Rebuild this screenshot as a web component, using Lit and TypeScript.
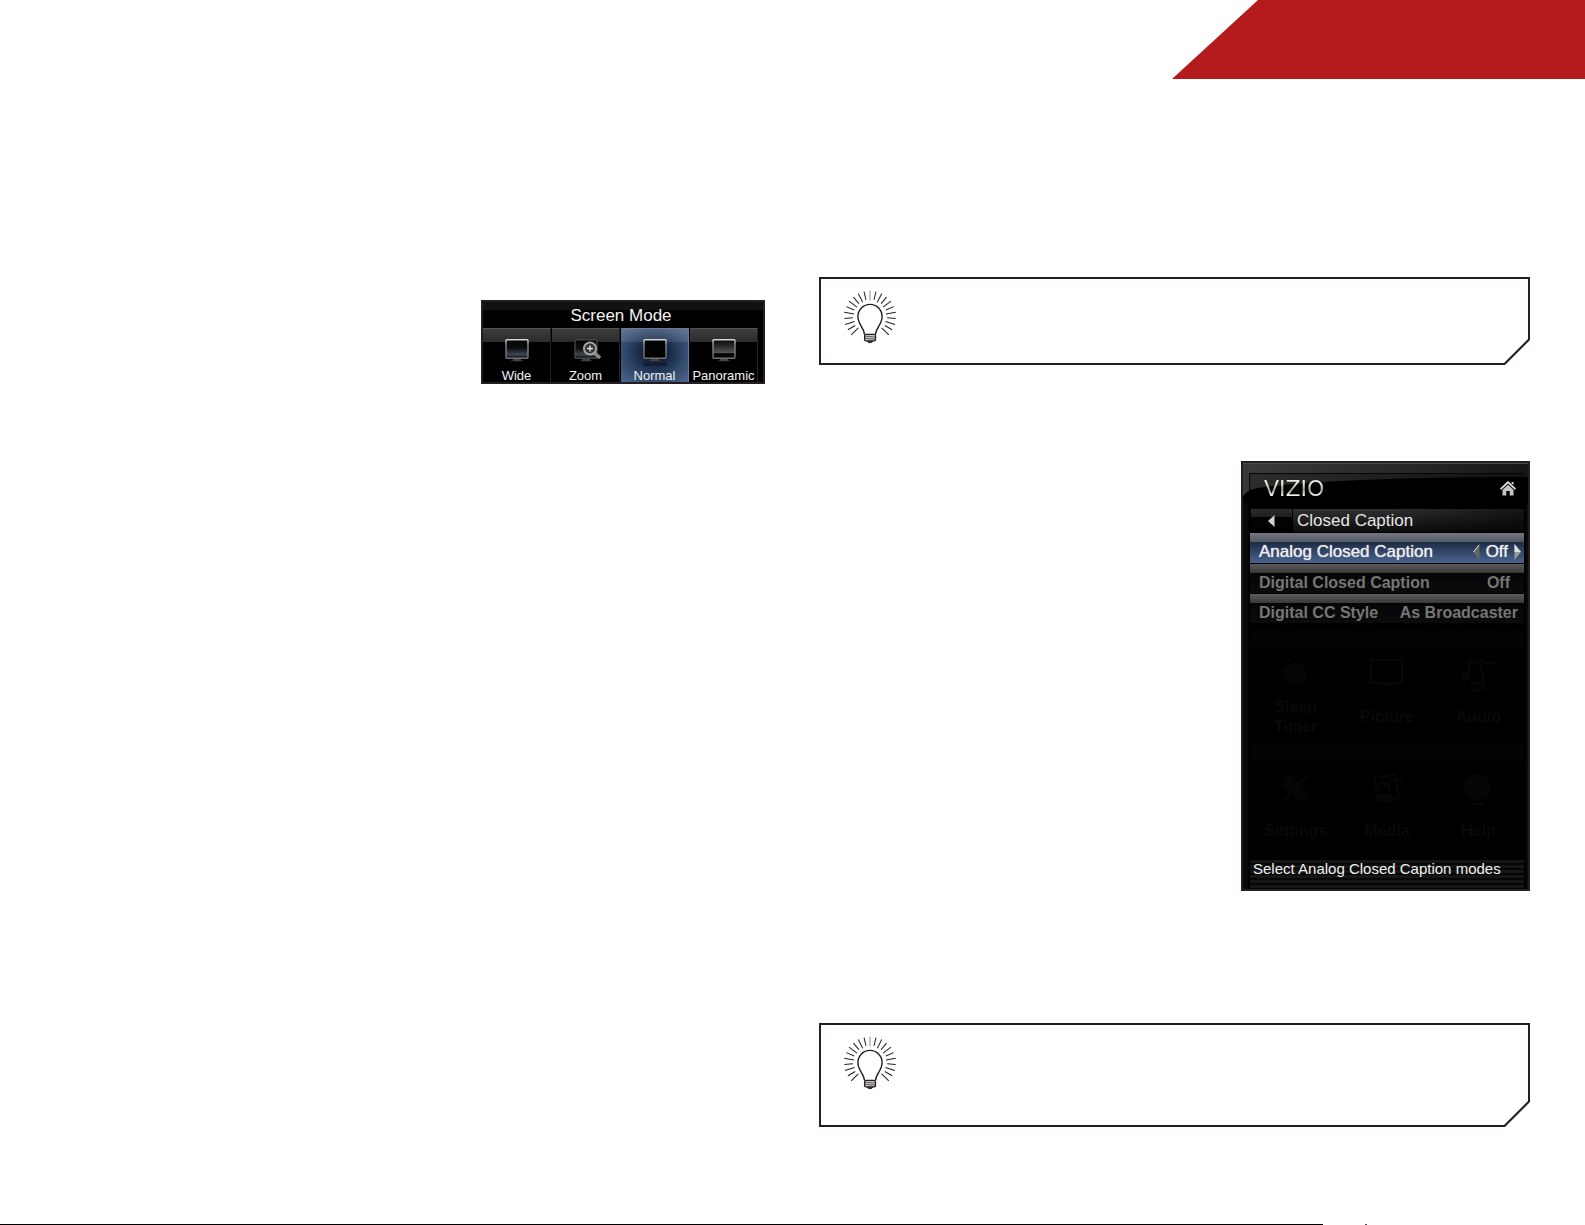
import { LitElement, html, svg, css } from "lit";
import { customElement, property, state } from "lit/decorators.js";
import { classMap } from "lit/directives/class-map.js";

@customElement("tip-box")
class TipBox extends LitElement {
  static styles = css`
    :host {
      display: block;
    }
    .edge {
      box-sizing: border-box;
      height: 100%;
      padding: 2px;
      background: #231f20;
      clip-path: polygon(0 0, 100% 0, 100% calc(100% - 25px), calc(100% - 25px) 100%, 0 100%);
    }
    .face {
      box-sizing: border-box;
      height: 100%;
      padding: 11px 23px;
      background: #fff;
      clip-path: polygon(0 0, 100% 0, 100% calc(100% - 24px), calc(100% - 24px) 100%, 0 100%);
    }
    .bulb {
      display: block;
      width: 52px;
      height: 54px;
    }
  `;

  render() {
    const rays = Array.from({ length: 21 }, (_, i) => (i - 10) * 13.4);
    return html`
      <aside class="edge">
        <div class="face">
          <svg class="bulb" viewBox="0 0 52 54" fill="none" stroke="#231f20" aria-hidden="true">
            ${rays.map(
              (a, i) => svg`<path d="M26 ${i % 2 ? 9.5 : 10.5}V${i % 2 ? 1 : 0.6}" stroke-width="${i === 10 ? 0.5 : 1}" transform="rotate(${a} 26 26.7)"/>`
            )}
            <path
              d="M20.4 44.3C20.3 38 13.9 34.5 13.9 26.5a12.1 12.1 0 0 1 24.2 0C38.1 34.5 31.8 38 31.6 44.3"
              stroke-width="1.4"
            />
            <rect x="20.6" y="44.4" width="10.9" height="6.4" rx="1" fill="#c9c5c5" stroke-width="1.3" />
            <path d="M21 46.2l10 .8M21 48.3l10 .8" stroke-width=".6" />
            <path d="M23.2 51.4h5.6l-1.4 1.2h-2.8z" fill="#231f20" stroke-width=".9" />
          </svg>
        </div>
      </aside>
    `;
  }
}

@customElement("screen-mode")
class ScreenMode extends LitElement {
  @state() private mode = "Normal";

  static styles = css`
    :host {
      display: block;
      font-family: "Liberation Sans", Arial, sans-serif;
      color: #f2f2f2;
    }
    .panel {
      border: 2px solid #231f20;
      background: linear-gradient(#121212 0 8px, #000 8px);
    }
    .title {
      margin: 0;
      padding: 4px 4px 2px 0;
      font-size: 17px;
      line-height: 20px;
      font-weight: 400;
      text-align: center;
    }
    .modes {
      display: grid;
      grid-template-columns: repeat(4, 1fr);
      gap: 1px;
      padding-right: 5px;
    }
    .mode {
      display: flex;
      flex-direction: column;
      align-items: center;
      height: 54px;
      margin: 0;
      padding: 10px 0 0;
      border: 0;
      border-top: 1px solid #555;
      border-right: 1px solid #222;
      background: linear-gradient(#3e3e3e, #2b2b2b 13px, #000 13px);
      color: inherit;
      font: 13px/14px "Liberation Sans", Arial, sans-serif;
      white-space: nowrap;
    }
    .mode.on {
      border-color: #6b7a92;
      background: linear-gradient(rgba(190, 200, 215, 0.24), rgba(150, 165, 185, 0.18) 13px, transparent 13px),
        radial-gradient(ellipse at 50% 45%, #0d1a30 15%, #2a4265 55%, #4a6489 95%);
    }
    .icon {
      flex: none;
      width: 30px;
      height: 30px;
    }
  `;

  private icon(name: string) {
    const fill = name === "Normal" ? "#030303" : name === "Panoramic" ? "url(#p)" : "url(#w)";
    return html`<svg class="icon" viewBox="0 0 30 30" aria-hidden="true">
      <defs>
        <linearGradient id="w" x2="0" y2="1">
          <stop offset="0" stop-color="#050505" /><stop offset=".45" stop-color="#0c0d10" />
          <stop offset=".8" stop-color="#3c4653" /><stop offset="1" stop-color="#0a0a0a" />
        </linearGradient>
        <linearGradient id="p" x2="0" y2="1">
          <stop offset="0" stop-color="#0a0a0a" /><stop offset=".3" stop-color="#242424" />
          <stop offset=".7" stop-color="#555" /><stop offset=".75" stop-color="#050505" />
        </linearGradient>
        <linearGradient id="rim" x2="0" y2="1">
          <stop offset="0" stop-color="#d5d5d5" /><stop offset=".3" stop-color="#8a8a8a" />
          <stop offset="1" stop-color="#707070" />
        </linearGradient>
      </defs>
      <rect x="4" y=".8" width="22" height="18.4" rx="1" fill=${fill} stroke=${name === "Zoom" ? "#444" : "url(#rim)"} stroke-width="1.4" />
      <path d="M11 20h8v1.5h2V22.2H9v-.7h2z" fill="#444" />
      ${name === "Normal" ? svg`<path d="M3 24h24v2H3zM4 26h22v1H4z" fill="#101d33"/>` : ""}
      ${name === "Zoom"
        ? svg`<path d="M23.5 14l5.5 5" stroke="#888" stroke-width="3.6"/><circle cx="19" cy="9.5" r="6" fill="#333" stroke="#a5a5a5" stroke-width="2"/><path d="M19 6.5v6M16 9.5h6" stroke="#ddd" stroke-width="1.4"/>`
        : ""}
    </svg>`;
  }

  render() {
    return html`
      <section class="panel" aria-labelledby="t">
        <h2 class="title" id="t">Screen Mode</h2>
        <div class="modes">
          ${["Wide", "Zoom", "Normal", "Panoramic"].map(
            (m) => html`<button
              class=${classMap({ mode: true, on: m === this.mode })}
              aria-pressed=${m === this.mode}
              @click=${() => (this.mode = m)}
            >${this.icon(m)}${m}</button>`
          )}
        </div>
      </section>
    `;
  }
}

const TILES = [
  {
    lines: ["Sleep", "Timer"],
    art: svg`<circle cx="17" cy="18" r="10"/><path d="M9 5l4-2M25 5l-4-2" />`,
  },
  {
    lines: ["Picture"],
    art: svg`<path d="M2 4h31v23H2zM11 29h13" fill="none"/><path d="M16 18l5-3"/>`,
  },
  {
    lines: ["Audio"],
    art: svg`<path d="M9 20V5l7 2M24 29L20 4l8 4 8-2" fill="none"/><ellipse cx="6" cy="20" rx="4" ry="3"/><ellipse cx="18" cy="31" rx="7" ry="4" fill="none"/>`,
  },
  {
    lines: ["Settings"],
    art: svg`<path d="M4 32L30 5M5 8l20 23" /><path d="M8 5l6 2 3 5 9 8 5 5-4 6-7-4-8-8-7-4z" stroke-dasharray="4 2"/>`,
  },
  {
    lines: ["Media"],
    art: svg`<path d="M6 8l20-3 4 23-22 3zM20 28V12l14-4" fill="none"/><path d="M8 18l5-7 4 6 6-9"/><ellipse cx="16" cy="28" rx="8" ry="3"/>`,
  },
  {
    lines: ["Help"],
    art: svg`<circle cx="17" cy="17" r="12"/><path d="M13 13q4-6 8 0 0 3-4 5v4M10 34h14" fill="none"/>`,
  },
];

@customElement("caption-menu")
class CaptionMenu extends LitElement {
  @property({ type: String }) help = "Select Analog Closed Caption modes";

  static styles = css`
    :host {
      display: block;
      font-family: "Liberation Sans", Arial, sans-serif;
      color: #e6e6e6;
    }
    button {
      margin: 0;
      padding: 0;
      border: 0;
      background: none;
      color: inherit;
      font: inherit;
    }
    svg {
      display: block;
    }
    .menu {
      position: relative;
      display: flex;
      flex-direction: column;
      border: 2px solid #231f20;
      padding: 10px 4px 0 7px;
      background: linear-gradient(90deg, #090909 5px, #000 5px, #000 calc(100% - 2px), #0a0a0a calc(100% - 2px));
    }
    .gloss {
      position: absolute;
      left: 0;
      top: 0;
      width: 100%;
      height: 40px;
    }
    .brand {
      position: relative;
      display: flex;
      align-items: center;
      justify-content: space-between;
      height: 31px;
      padding: 0 8px 0 14px;
      margin-bottom: 5px;
    }
    .logo {
      font: 22px/26px "DejaVu Sans", sans-serif;
      color: transparent;
      background: linear-gradient(#f0ece4 7px, #a39d94 14px, #f5f1e9 19px);
      -webkit-background-clip: text;
      background-clip: text;
    }
    .crumb {
      display: grid;
      grid-template-columns: 41px 1fr;
      gap: 1px;
      height: 23px;
      padding-left: 1px;
      margin-bottom: 1px;
    }
    .back {
      display: grid;
      place-items: center;
      background: linear-gradient(#2c2c2c, #1e1e1e 8px, #020202 8px);
    }
    .heading {
      margin: 0;
      padding-left: 4px;
      font-size: 17px;
      line-height: 23px;
      font-weight: 400;
      background: linear-gradient(90deg, transparent 40%, rgba(0, 0, 0, 0.55)), linear-gradient(#303030, #0c0c0c);
    }
    .rows {
      display: grid;
      gap: 1px;
      margin: 0;
    }
    .row {
      display: flex;
      align-items: flex-end;
      justify-content: space-between;
      box-sizing: border-box;
      height: 29px;
      padding: 0 6px 0 9px;
      font-size: 16px;
      line-height: 20px;
      font-weight: 700;
      color: #767676;
      background: linear-gradient(#5c5c5c, #383838 9px, #050505 9px, #0b0b0b);
    }
    .row.on {
      height: 30px;
      padding-right: 3px;
      padding-bottom: 1px;
      font-size: 17px;
      font-weight: 400;
      color: #ededed;
      text-shadow: 0 0 1px #ededed;
      background: linear-gradient(#74787c, #505964 9px, #1d2b44 9px, #4a648f);
    }
    .row dd {
      margin: 0;
    }
    .row .plain {
      padding-right: 8px;
    }
    .stepper {
      display: flex;
      align-items: center;
      gap: 6px;
    }
    .tiles {
      display: grid;
      grid-template-columns: repeat(3, 1fr);
      grid-auto-rows: 114px;
      padding: 7px 0 2px;
      color: #090909;
    }
    .tile {
      display: flex;
      flex-direction: column;
      align-items: center;
      padding-top: 26px;
      font-size: 16px;
      line-height: 20px;
      font-weight: 700;
      background: linear-gradient(#020303 17px, #000 17px);
    }
    .art {
      width: 36px;
      height: 36px;
      fill: #040505;
      stroke: #060707;
      stroke-width: 2;
      flex: none;
    }
    .name {
      display: grid;
      align-content: center;
      height: 50px;
    }
    .help {
      margin: 0;
      box-sizing: border-box;
      height: 29px;
      padding-left: 3px;
      font-size: 15px;
      line-height: 17px;
      white-space: nowrap;
      color: #f0f0f0;
      background: repeating-linear-gradient(#161616 0 3px, #060606 3px 5px);
    }
  `;

  render() {
    return html`
      <section class="menu" aria-labelledby="h">
        <svg class="gloss" viewBox="0 0 285 40" preserveAspectRatio="none" aria-hidden="true">
          <defs>
            <linearGradient id="f"><stop stop-color="#3a3a3a" /><stop offset=".6" stop-color="#262626" /><stop offset="1" stop-color="#161616" /></linearGradient>
            <linearGradient id="b"><stop stop-color="#2c2c2c" /><stop offset=".7" stop-color="#1a1a1a" /><stop offset="1" stop-color="#111" /></linearGradient>
          </defs>
          <path d="M0 0H285V40H0z" fill="url(#f)" />
          <path d="M0 .5H285" stroke="#4c4c4c" />
          <path d="M6 10H281V40H6z" fill="url(#b)" />
          <path d="M6.5 40V10.5H281" fill="none" stroke="#050505" />
          <path d="M0 40V33Q4 27 15 25Q100 14 285 14V40z" fill="#000" />
        </svg>
        <header class="brand">
          <span class="logo">VIZIO</span>
          <button aria-label="Home">
            <svg width="16" height="15" viewBox="0 0 16 15">
              <path d="M8 0L16 7.5 14.8 8.8 8 2.6 1.2 8.8 0 7.5zM11.5 1H13.5V4L11.5 2.2z" fill="#e2e2e2" />
              <path d="M2.5 8.8L8 3.8 13.5 8.8V14.5H9.7V10H6.3V14.5H2.5z" fill="#c4c4c4" />
            </svg>
          </button>
        </header>
        <nav class="crumb">
          <button class="back" aria-label="Back">
            <svg width="7" height="12" viewBox="0 0 7 12"><path d="M6.5 0V12L0 6z" fill="#d0d0d0" /></svg>
          </button>
          <h2 class="heading" id="h">Closed Caption</h2>
        </nav>
        <dl class="rows">
          <div class="row on">
            <dt>Analog Closed Caption</dt>
            <dd class="stepper">
              <button aria-label="Previous">
                <svg width="7" height="16" viewBox="0 0 7 16"><path d="M6.5 0V16L0 8z" fill="#666" /><path d="M6 1L.5 8" stroke="#ddd" /></svg>
              </button>
              <span>Off</span>
              <button aria-label="Next">
                <svg width="7" height="16" viewBox="0 0 7 16"><path d="M.5 0V16L7 8z" fill="#999" /><path d="M.5 0L7 8H.5z" fill="#ddd" /></svg>
              </button>
            </dd>
          </div>
          <div class="row">
            <dt>Digital Closed Caption</dt>
            <dd class="plain">Off</dd>
          </div>
          <div class="row">
            <dt>Digital CC Style</dt>
            <dd>As Broadcaster</dd>
          </div>
        </dl>
        <div class="tiles">
          ${TILES.map(
            (t) => html`<button class="tile">
              <svg class="art" viewBox="0 0 36 36" aria-hidden="true">${t.art}</svg>
              <span class="name">${t.lines.map((l) => html`<span>${l}</span>`)}</span>
            </button>`
          )}
        </div>
        <p class="help">${this.help}</p>
      </section>
    `;
  }
}

@customElement("app-root")
class AppRoot extends LitElement {
  static styles = css`
    :host {
      display: block;
      background: #fff;
    }
    .page {
      display: flex;
      flex-direction: column;
      min-height: 100vh;
    }
    .banner {
      align-self: flex-end;
      width: 413px;
      height: 79px;
      background: #b31b1d;
      clip-path: polygon(86px 0, 100% 0, 100% 100%, 0 100%);
    }
    .columns {
      flex: 1;
      display: grid;
      grid-template-columns: 1fr 1fr;
      gap: 54px;
      padding: 0 55px 0 54px;
    }
    .left,
    .right {
      display: flex;
      flex-direction: column;
      align-items: flex-end;
    }
    .left {
      padding-top: 221px;
    }
    .right {
      padding-top: 198px;
    }
    .modes {
      width: 284px;
    }
    .short,
    .tall {
      width: 100%;
      height: 88px;
    }
    .tall {
      height: 104px;
    }
    .menu {
      width: 289px;
      margin: 96px 0 132px;
    }
    .foot {
      display: flex;
      gap: 42px;
      height: 1px;
      padding-right: 218px;
    }
    .rule {
      flex: 1;
      background: #000;
    }
    .dot {
      width: 2px;
      background: #4a4390;
    }
  `;

  render() {
    return html`
      <div class="page">
        <header class="banner"></header>
        <main class="columns">
          <div class="left"><screen-mode class="modes"></screen-mode></div>
          <div class="right">
            <tip-box class="short"></tip-box>
            <caption-menu class="menu"></caption-menu>
            <tip-box class="tall"></tip-box>
          </div>
        </main>
        <footer class="foot"><span class="rule"></span><span class="dot"></span></footer>
      </div>
    `;
  }
}
